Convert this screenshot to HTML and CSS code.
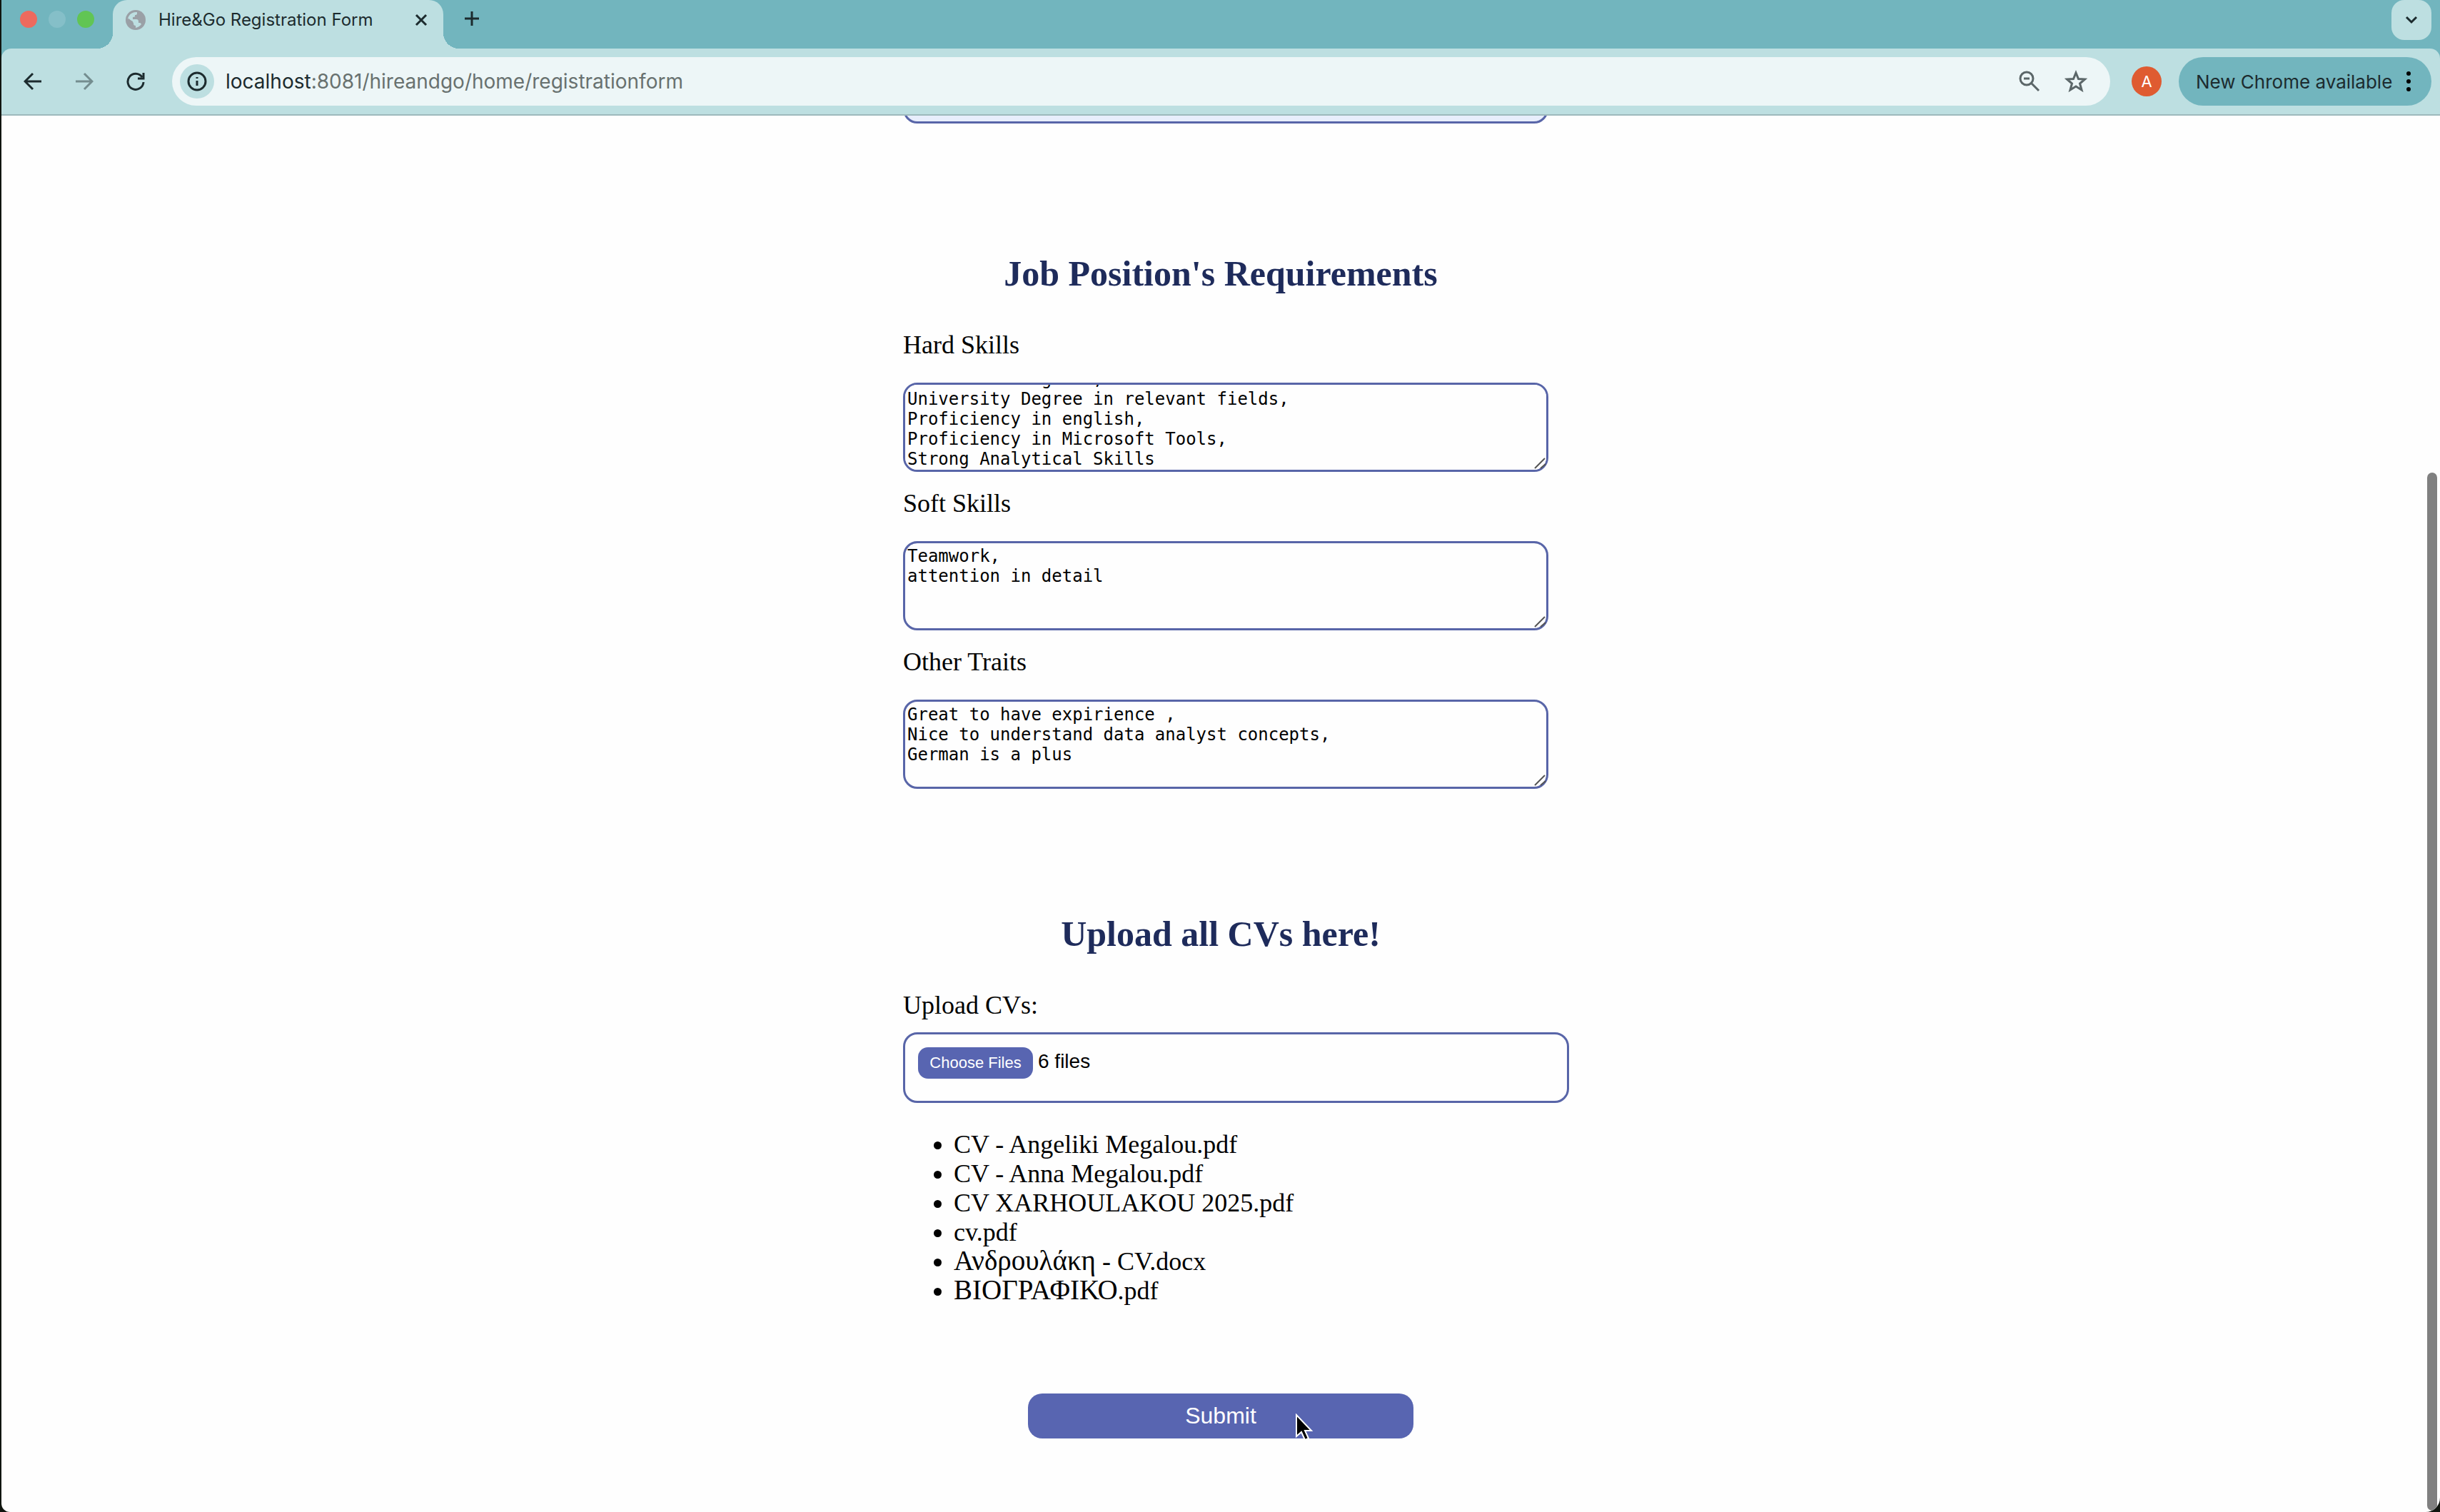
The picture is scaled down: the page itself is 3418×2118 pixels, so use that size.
FILE: index.html
```html
<!DOCTYPE html>
<html lang="en">
<head>
<meta charset="utf-8">
<title>Hire&amp;Go Registration Form</title>
<link rel="stylesheet" href="styles.css">
</head>
<body>
<div class="window">
  <header class="browser">
    <div class="tab-strip">
      <div class="lights">
        <span class="light light-close"></span>
        <span class="light light-min"></span>
        <span class="light light-max"></span>
      </div>
      <div class="tab">
        <svg class="favicon" viewBox="0 0 28 28"><circle cx="14" cy="14" r="14" fill="#9aa0a6"/><path d="M3 14C3 8 8 3 14 3H16V5Q16 7 13 7V9Q13 10 10 10V13H15Q18 13 18 16V18H20Q21 18 22 20Q19 24 14 25V22Q11 22 11 19V18L4 12Z" fill="#bddfe1"/><path d="M3 13L10 19V18Q11 16 8 15L4 12Z" fill="#9aa0a6"/></svg>
        <span class="tab-title">Hire&amp;Go Registration Form</span>
        <button class="icon-button" type="button" aria-label="Close tab"><svg width="18" height="18" viewBox="0 0 18 18"><path d="M2 2L16 16M16 2L2 16" class="stroke"/></svg></button>
      </div>
      <button class="icon-button new-tab" type="button" aria-label="New tab"><svg width="22" height="22" viewBox="0 0 22 22"><path d="M11 1V21M1 11H21" class="stroke"/></svg></button>
      <button class="tab-search" type="button" aria-label="Search tabs"><svg width="18" height="12" viewBox="0 0 18 12"><path d="M2 2L9 9L16 2" class="stroke"/></svg></button>
    </div>
    <div class="toolbar">
      <nav class="nav">
        <button class="icon-button" type="button" aria-label="Back"><svg width="26" height="26" viewBox="0 0 26 26"><path d="M25 13H3M13 2L2 13L13 24" class="stroke"/></svg></button>
        <button class="icon-button faded" type="button" aria-label="Forward"><svg width="26" height="26" viewBox="0 0 26 26"><path d="M1 13H23M13 2L24 13L13 24" class="stroke"/></svg></button>
        <button class="icon-button" type="button" aria-label="Reload"><svg width="26" height="26" viewBox="0 0 26 26"><path d="M22 7A11 11 0 1 0 24 14M24 1V9H16" class="stroke"/></svg></button>
      </nav>
      <div class="omnibox">
        <button class="site-info" type="button" aria-label="Site information"><svg width="28" height="28" viewBox="0 0 28 28"><circle cx="14" cy="14" r="12" class="stroke"/><path d="M14 13V20M14 8V10" class="stroke"/></svg></button>
        <div class="url"><span class="host">localhost</span>:8081/hireandgo/home/registrationform</div>
        <button class="icon-button grey" type="button" aria-label="Zoom"><svg width="30" height="30" viewBox="0 0 30 30"><circle cx="11" cy="11" r="9" class="stroke"/><path d="M17 17L28 28M7 11H15" class="stroke"/></svg></button>
        <button class="icon-button grey" type="button" aria-label="Bookmark"><svg width="32" height="32" viewBox="0 0 32 32"><path d="M16 4L19.500 12.500L28.500 13L21.500 19L24 28L16 23L8 28L10.500 19L3.500 13L12.500 12.500Z" class="stroke"/></svg></button>
      </div>
      <button class="avatar" type="button">A</button>
      <button class="update" type="button">New Chrome available<svg width="8" height="30" viewBox="0 0 8 30"><circle cx="4" cy="4" r="3"/><circle cx="4" cy="15" r="3"/><circle cx="4" cy="26" r="3"/></svg></button>
    </div>
  </header>
  <main class="page">
    <form class="form">
      <div class="previous-field"></div>
      <section class="section">
        <h2 class="heading">Job Position's Requirements</h2>
        <div class="field">
          <label class="label" for="hard">Hard Skills</label>
          <div class="area-wrap"><textarea class="area" id="hard">Bachelor's Degrees,
University Degree in relevant fields,
Proficiency in english,
Proficiency in Microsoft Tools,
Strong Analytical Skills
</textarea><svg class="grip" viewBox="0 0 18 18"><path d="M1 16L15 2M9 16L16 10"/></svg></div>
        </div>
        <div class="field">
          <label class="label" for="soft">Soft Skills</label>
          <div class="area-wrap"><textarea class="area" id="soft">Teamwork,
attention in detail</textarea><svg class="grip" viewBox="0 0 18 18"><path d="M1 16L15 2M9 16L16 10"/></svg></div>
        </div>
        <div class="field">
          <label class="label" for="other">Other Traits</label>
          <div class="area-wrap"><textarea class="area" id="other">Great to have expirience ,
Nice to understand data analyst concepts,
German is a plus</textarea><svg class="grip" viewBox="0 0 18 18"><path d="M1 16L15 2M9 16L16 10"/></svg></div>
        </div>
      </section>
      <section class="section">
        <h2 class="heading">Upload all CVs here!</h2>
        <label class="label" for="cvs">Upload CVs:</label>
        <input class="file-box" id="cvs" type="file" multiple>
        <ul class="files">
          <li>CV - Angeliki Megalou.pdf</li>
          <li>CV - Anna Megalou.pdf</li>
          <li>CV XARHOULAKOU 2025.pdf</li>
          <li>cv.pdf</li>
          <li><span class="greek" lang="el">Ανδρουλάκη</span> - CV.docx</li>
          <li><span class="greek" lang="el">ΒΙΟΓΡΑΦΙΚΟ</span>.pdf</li>
        </ul>
      </section>
      <button class="submit" type="button">Submit<svg class="cursor" viewBox="0 0 26 40"><path d="M2 2V32L9 26L14 37L19 35L14 24H23Z"/></svg></button>
    </form>
    <div class="scroll-thumb"></div>
  </main>
</div>
<script src="script.js"></script>
</body>
</html>
```
FILE: styles.css
```css
* { box-sizing: border-box; }
body { margin: 0; background: #10150f; }
button { border: 0; padding: 0; margin: 0; background: none; color: inherit; font: inherit; }
svg { display: block; }
.stroke { fill: none; stroke: currentColor; stroke-width: 3; }

.window { display: flex; flex-direction: column; min-height: 100vh; margin-left: 2px; background: #fefefe; border-radius: 0 0 20px 12px; overflow: hidden; }
.browser { background: #72b5be; color: #1c2b2e; font-family: Inter, sans-serif; }
.tab-strip { display: flex; align-items: flex-start; height: 68px; padding: 0 12px 0 26px; }
.lights { display: flex; gap: 16px; padding-top: 15px; }
.light { width: 24px; height: 24px; border-radius: 50%; }
.light-close { background: #ed6a5e; }
.light-min { background: #85bfc8; }
.light-max { background: #61c554; }
.tab { position: relative; display: flex; align-items: center; width: 463px; height: 68px; margin-left: 26px; padding: 0 22px 12px 18px; background: #bddfe1; border-radius: 20px 20px 0 0; }
.tab::before, .tab::after { content: ""; position: absolute; bottom: 0; width: 22px; height: 22px; }
.tab::before { right: 100%; background: radial-gradient(circle at 0 0, transparent 22px, #bddfe1 22px); }
.tab::after { left: 100%; background: radial-gradient(circle at 100% 0, transparent 22px, #bddfe1 22px); }
.favicon { width: 28px; height: 28px; }
.tab-title { flex: 1; margin-left: 18px; font-size: 24px; line-height: 32px; white-space: nowrap; }
.new-tab { margin: 15px 0 0 29px; }
.tab-search { display: grid; place-items: center; width: 56px; height: 56px; margin-left: auto; background: #bddfe1; border-radius: 18px; }

.toolbar { display: flex; align-items: center; height: 94px; padding: 0 12px 0 31px; background: #bddfe1; border-bottom: 2px solid #9db9bc; border-radius: 14px 14px 0 0; }
.nav { display: flex; gap: 46px; }
.faded { opacity: .45; }
.grey { color: #5b6668; }
.omnibox { display: flex; flex: 1; align-items: center; gap: 34px; height: 68px; margin-left: 38px; padding: 0 32px 0 11px; background: #edf6f7; border-radius: 34px; }
.site-info { display: grid; place-items: center; width: 48px; height: 48px; background: #bddfe1; border-radius: 50%; }
.url { flex: 1; margin-left: -18px; color: #68716f; font-size: 28px; line-height: 36px; }
.host { color: #1c2b2e; }
.avatar { width: 42px; height: 42px; margin: 0 24px 0 30px; background: #df5b31; color: #fff; border-radius: 50%; font-size: 22px; }
.update { display: flex; align-items: center; justify-content: space-between; width: 354px; height: 68px; padding: 0 28px 0 24px; background: #72b5be; border-radius: 34px; font-size: 26px; white-space: nowrap; }

.page { position: relative; flex: 1; overflow: hidden; color: #000; font-family: "Liberation Serif", serif; font-size: 36px; }
.form { width: 890px; margin: 0 auto; }
.previous-field { width: 904px; height: 60px; margin-top: -49px; background: #e8eefc; border: 3px solid #5865a8; border-radius: 20px; }
.section { padding-top: 180px; }
.section + .section { padding-top: 173px; }
.heading { margin: 0 0 50px; color: #1e2b5b; font-size: 50px; line-height: 60px; text-align: center; }
.field + .field { margin-top: 24px; }
.label { display: block; line-height: 40px; }
.area-wrap { position: relative; width: 904px; margin-top: 33px; }
.area { display: block; width: 100%; height: 125px; padding: 4px 3px; border: 3px solid #5865a8; border-radius: 20px; background: #fefefe; color: #000; font: 24px/28px "DejaVu Sans Mono", monospace; resize: none; scrollbar-width: none; }
.grip { position: absolute; right: 2px; bottom: 3px; width: 18px; height: 18px; fill: none; stroke: #555; stroke-width: 2; }
.file-box { display: block; width: 933px; height: 99px; margin-top: 18px; padding: 18px; border: 3px solid #5865a8; border-radius: 20px; color: #000; font: 28px "Liberation Sans", sans-serif; }
.file-box::file-selector-button { width: 161px; height: 44px; margin: 0 7px 0 0; padding: 0; border: 0; background: #5865b1; color: #fff; border-radius: 14px; font: 22px "Liberation Sans", sans-serif; }
.files { margin: 38px 0 0; padding-left: 71px; line-height: 41px; }
.greek { font-size: 39px; line-height: 36px; }
.submit { position: relative; display: block; width: 540px; height: 63px; margin: 123px auto 103px; background: #5865b1; color: #fff; border-radius: 20px; font-family: "Liberation Sans", sans-serif; font-size: 32px; }
.cursor { position: absolute; left: 374px; top: 28px; width: 26px; height: 40px; fill: #000; stroke: #fff; stroke-width: 2; }
.scroll-thumb { position: absolute; top: 500px; right: 4px; bottom: 2px; width: 14px; background: #808080; border-radius: 7px; }
```
FILE: script.js
```js
// Keep the latest entries of the long list in view.
document.getElementById("hard").scrollTop = 26;

// Restore the chosen files in the upload control from the list below it.
const chosen = new DataTransfer();
document.querySelectorAll(".files li").forEach((item) => {
  chosen.items.add(new File([""], item.textContent));
});
document.getElementById("cvs").files = chosen.files;
```
